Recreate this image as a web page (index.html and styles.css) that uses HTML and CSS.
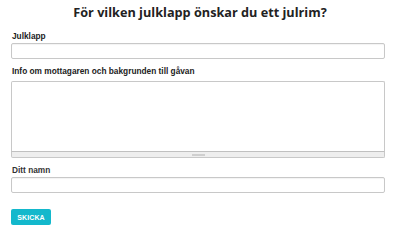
FILE: index.html
```html
<!DOCTYPE html>
<html lang="sv">
<head>
<meta charset="utf-8">
<link rel="stylesheet" href="styles.css">
</head>
<body>
<div class="page">
  <h1 class="title">För vilken julklapp önskar du ett julrim?</h1>
  <form class="form">
    <div class="field">
      <label class="label" for="gift">Julklapp</label>
      <input class="input" id="gift" type="text">
    </div>
    <div class="field field-area">
      <label class="label label-area" for="info">Info om mottagaren och bakgrunden till gåvan</label>
      <div class="textarea-wrap">
        <textarea class="textarea" id="info"></textarea>
        <div class="grippie"><span class="grip"></span></div>
      </div>
    </div>
    <div class="field field-last">
      <label class="label label-name" for="name">Ditt namn</label>
      <input class="input" id="name" type="text">
    </div>
    <button class="button" type="button">SKICKA</button>
  </form>
</div>
</body>
</html>
```

FILE: styles.css
```css
* { box-sizing: border-box; }
html, body { margin: 0; padding: 0; background: #fff; }
body { font-family: "Liberation Sans", Arial, sans-serif; color: #222; }
.page { padding: 3px 15px 0 11px; }
.title {
  margin: 0 0 10px;
  font-family: "Open Sans", "Liberation Sans", sans-serif;
  font-size: 12.7px;
  line-height: 18px;
  font-weight: 700;
  text-align: center;
  color: #222;
  padding-left: 4px;
}
.form { display: flex; flex-direction: column; }
.field { display: flex; flex-direction: column; margin-bottom: 7px; }
.field-area { margin-bottom: 7px; }
.field-last { margin-bottom: 0; }
.label {
  font-size: 8.3px;
  font-weight: 700;
  line-height: 10px;
  margin: 0 0 2px 1px;
  color: #222;
}
.label-area { margin-bottom: 5px; }
.label-name { color: #333; }
.input {
  display: block;
  width: 100%;
  height: 16px;
  margin: 0;
  border: 1px solid #c8c8c8;
  border-radius: 2px;
  background: #fff;
  box-shadow: inset 0 1px 1px rgba(0,0,0,0.05);
  padding: 0 4px;
  font-size: 10px;
}
.textarea-wrap { display: flex; flex-direction: column; }
.textarea {
  display: block;
  width: 100%;
  height: 71px;
  margin: 0;
  border: 1px solid #c8c8c8;
  border-bottom: 1px solid #c0c0c0;
  border-radius: 2px 2px 0 0;
  resize: none;
  background: #fff;
  font-size: 10px;
}
.grippie {
  height: 6px;
  background: #eee;
  border: 1px solid #c8c8c8;
  border-top: 0;
  border-radius: 0 0 2px 2px;
  display: flex;
  justify-content: center;
  align-items: center;
}
.grip { width: 13px; height: 2px; background: #cfcfcf; }
.button {
  align-self: flex-start;
  margin-top: 16px;
  width: 40px;
  height: 16px;
  padding: 0;
  border: 0;
  border-radius: 2px;
  background: #13b8cc;
  color: #fff;
  font-family: "Liberation Sans", Arial, sans-serif;
  font-size: 7px;
  font-weight: 700;
  letter-spacing: 0.1px;
}
```
